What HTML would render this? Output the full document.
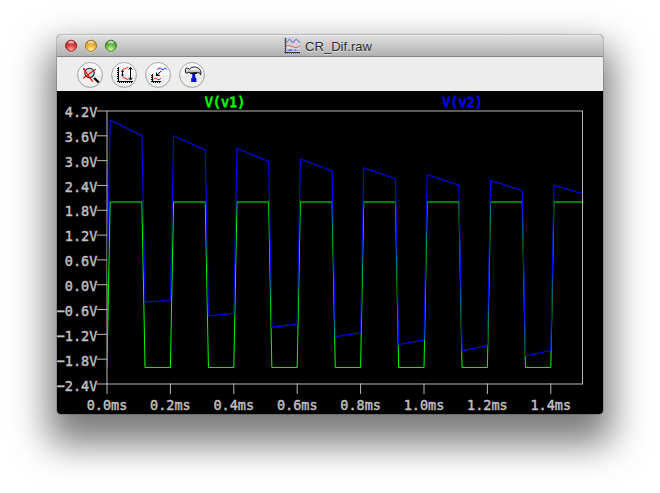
<!DOCTYPE html>
<html><head><meta charset="utf-8"><title>CR_Dif.raw</title>
<style>
html,body{margin:0;padding:0;background:#fff;}
body{width:660px;height:493px;position:relative;overflow:hidden;font-family:"Liberation Sans",sans-serif;}
.shadow{position:absolute;left:57px;top:35px;width:546px;height:379px;border-radius:4px 4px 4px 4px;
 box-shadow:0 21px 37px 8.5px rgba(0,0,0,0.52),0 0 0 1px rgba(0,0,0,0.17);}
.win{position:absolute;left:57px;top:35px;width:546px;height:379px;border-radius:4px 4px 4px 4px;overflow:hidden;background:#000;}
.titlebar{position:absolute;left:0;top:0;width:100%;height:22px;box-sizing:border-box;
 background:linear-gradient(#dedede 0%,#c8c8c8 50%,#b1b1b1 100%);border-top:1px solid #eeeeee;border-bottom:1px solid #828282;}
.title{position:absolute;left:248px;top:2px;font-size:13px;line-height:16px;color:#2a2a2a;white-space:nowrap;letter-spacing:0.45px;text-shadow:0 1px 0 rgba(255,255,255,0.6);}
.toolbar{position:absolute;left:0;top:22px;width:100%;height:34px;background:#ededed;}
svg.plot{position:absolute;left:0;top:0;width:660px;height:493px;}
</style></head><body>
<div class="shadow"></div>
<div class="win">
 <div class="titlebar">
 </div>
 <div class="toolbar"></div>
</div>
<svg class="plot" viewBox="0 0 660 493">

<defs>
<linearGradient id="bg" x1="0" y1="0" x2="0" y2="1">
<stop offset="0" stop-color="#ffffff"/><stop offset="0.5" stop-color="#f7f7f7"/><stop offset="0.52" stop-color="#ebebeb"/><stop offset="1" stop-color="#f3f3f3"/>
</linearGradient>
<radialGradient id="tr" cx="0.5" cy="0.85" r="0.7"><stop offset="0" stop-color="#ffb4ac"/><stop offset="0.5" stop-color="#ea4a4c"/><stop offset="1" stop-color="#b4242a"/></radialGradient>
<radialGradient id="ty" cx="0.5" cy="0.85" r="0.7"><stop offset="0" stop-color="#fff6b0"/><stop offset="0.5" stop-color="#f4bc40"/><stop offset="1" stop-color="#cf9226"/></radialGradient>
<radialGradient id="tg" cx="0.5" cy="0.85" r="0.7"><stop offset="0" stop-color="#dcf8b0"/><stop offset="0.5" stop-color="#7cc552"/><stop offset="1" stop-color="#47952f"/></radialGradient>
<linearGradient id="hl" x1="0" y1="0" x2="0" y2="1"><stop offset="0" stop-color="#fff" stop-opacity="0.95"/><stop offset="1" stop-color="#fff" stop-opacity="0.05"/></linearGradient>
<linearGradient id="hm" x1="0" y1="0" x2="0" y2="1"><stop offset="0" stop-color="#ffffff"/><stop offset="0.25" stop-color="#f4f4f4"/><stop offset="0.65" stop-color="#b4b4b4"/><stop offset="1" stop-color="#d8d8d8"/></linearGradient>
<clipPath id="pc"><rect x="107" y="105" width="476" height="285"/></clipPath>
</defs>
<!-- traffic lights -->
<g>
<circle cx="71.1" cy="46.5" r="6" fill="#fff" opacity="0.55"/><circle cx="91" cy="46.5" r="6" fill="#fff" opacity="0.55"/><circle cx="110.9" cy="46.5" r="6" fill="#fff" opacity="0.55"/>
<circle cx="71.1" cy="45.8" r="5.6" fill="url(#tr)" stroke="#8e2224" stroke-width="0.9"/>
<circle cx="91" cy="45.8" r="5.6" fill="url(#ty)" stroke="#96691c" stroke-width="0.9"/>
<circle cx="110.9" cy="45.8" r="5.6" fill="url(#tg)" stroke="#3c7428" stroke-width="0.9"/>
<ellipse cx="71.1" cy="42.7" rx="3.1" ry="1.7" fill="url(#hl)"/><ellipse cx="91" cy="42.7" rx="3.1" ry="1.7" fill="url(#hl)"/><ellipse cx="110.9" cy="42.7" rx="3.1" ry="1.7" fill="url(#hl)"/>
</g>
<text x="305" y="51.7" font-family="'Liberation Sans', sans-serif" font-size="13" fill="#fff" opacity="0.6" textLength="67" lengthAdjust="spacing">CR_Dif.raw</text>
<text x="305" y="50.8" font-family="'Liberation Sans', sans-serif" font-size="13" fill="#2c2c2c" textLength="67" lengthAdjust="spacing">CR_Dif.raw</text>
<!-- title icon -->
<g transform="translate(284,37.6)">
<rect x="0" y="0" width="16.2" height="16.2" fill="#d3d3d6"/>
<path d="M2 7.6 Q4 7.8 7.3 9 T14 9.7 L16 8.7 V10.8 H2Z" fill="#d4ecec" opacity="0.8"/>
<path d="M2 11.9 H16 V13.6 H2Z" fill="#b0b0e4" opacity="0.9"/>
<path d="M2.2 5.1 L5.6 1.6 L8.75 5.1 L12.2 1.6 L16 5.1" stroke="#7474ea" stroke-width="1.05" fill="none"/>
<path d="M1.95 8.5 Q3.2 7.6 4.6 8 T7.8 9 T11 9.8 T14.3 9.4 L16 8.4" stroke="#e46464" stroke-width="1.05" fill="none"/>
<path d="M4.3 12.6 H8.3 M10.6 12.6 H12.4" stroke="#5252d4" stroke-width="1.2" fill="none"/>
<path d="M1.7 0.4 V15.2" stroke="#333" stroke-width="1" fill="none"/>
<path d="M0.4 14.9 H16" stroke="#333" stroke-width="1" fill="none"/>
<path d="M0.7 0.5 V15" stroke="#333" stroke-width="1" stroke-dasharray="1 1" fill="none" opacity="0.55"/>
<path d="M1 15.9 H16" stroke="#333" stroke-width="1" stroke-dasharray="1 1" fill="none" opacity="0.55"/>
</g>
<!-- toolbar buttons -->
<circle cx="90.05" cy="75.6" r="12.6" fill="#000" opacity="0.10"/>
<circle cx="90.05" cy="74.9" r="12.4" fill="url(#bg)" stroke="#9e9e9e" stroke-width="0.9"/><circle cx="124.05" cy="75.6" r="12.6" fill="#000" opacity="0.10"/>
<circle cx="124.05" cy="74.9" r="12.4" fill="url(#bg)" stroke="#9e9e9e" stroke-width="0.9"/><circle cx="158.05" cy="75.6" r="12.6" fill="#000" opacity="0.10"/>
<circle cx="158.05" cy="74.9" r="12.4" fill="url(#bg)" stroke="#9e9e9e" stroke-width="0.9"/><circle cx="192.05" cy="75.6" r="12.6" fill="#000" opacity="0.10"/>
<circle cx="192.05" cy="74.9" r="12.4" fill="url(#bg)" stroke="#9e9e9e" stroke-width="0.9"/>
<g transform="translate(77,62)">
<circle cx="12.5" cy="10.9" r="4.7" fill="#d6dfdf" stroke="#111" stroke-width="1.1"/>
<path d="M10 9.4 L12.4 8.3 L12 9.9 Z M13.2 13.3 L15.4 11.4 L14.9 13.1Z" fill="#5cecf0"/>
<path d="M17.2 16 L21.7 20.5" stroke="#000" stroke-width="2.2"/>
<path d="M6.5 6.5 L15.65 19.6 M6.2 16.3 L18.7 7.1" stroke="#ff0000" stroke-width="1.15"/>
<circle cx="6.9" cy="7" r="0.9" fill="#ff0000"/>
</g>
<g transform="translate(111,62)">
<g fill="#000" shape-rendering="crispEdges">
<rect x="7" y="5" width="1" height="15"/><rect x="6" y="19" width="16" height="1"/>
<rect x="6" y="6" width="1" height="1"/><rect x="6" y="8" width="1" height="1"/><rect x="6" y="10" width="1" height="1"/><rect x="6" y="12" width="1" height="1"/><rect x="6" y="14" width="1" height="1"/><rect x="6" y="16" width="1" height="1"/><rect x="8" y="20" width="1" height="1"/><rect x="10" y="20" width="1" height="1"/><rect x="12" y="20" width="1" height="1"/><rect x="14" y="20" width="1" height="1"/><rect x="16" y="20" width="1" height="1"/><rect x="18" y="20" width="1" height="1"/><rect x="20" y="20" width="1" height="1"/>
</g>
<path d="M11.7 7.4 L17.4 5.3 M11.9 15.3 L17.4 17.8" stroke="#ff4020" stroke-width="1.1" fill="none"/>
<path d="M11.5 8.6 V13.8" stroke="#000" stroke-width="1"/>
<path d="M11.5 7.6 L13 10 H10Z M11.5 14.8 L13 12.4 H10Z" fill="#000"/>
<path d="M19.5 5.8 V17.6" stroke="#000" stroke-width="1"/>
<path d="M17.7 7.6 L19.5 5.3 L21.3 7.6 M17.7 15.8 L19.5 18.1 L21.3 15.8" stroke="#000" stroke-width="1" fill="none"/>
</g>
<g transform="translate(145,62)">
<path d="M8 16.5 H16.5 V18.8 H8Z" fill="#d8ffff" opacity="0.9"/>
<g fill="#000" shape-rendering="crispEdges">
<rect x="7" y="12" width="1" height="8"/><rect x="6" y="19" width="10" height="1"/>
<rect x="6" y="13" width="1" height="1"/><rect x="6" y="15" width="1" height="1"/><rect x="6" y="17" width="1" height="1"/><rect x="8" y="20" width="1" height="1"/><rect x="10" y="20" width="1" height="1"/><rect x="12" y="20" width="1" height="1"/><rect x="14" y="20" width="1" height="1"/>
</g>
<path d="M12.1 7.6 L13.5 6.3 H15.65 L16.9 7.5 H18.7 L19.6 6.3 H20.8 L21.8 7.6" stroke="#1a1aff" stroke-width="1" fill="none"/>
<path d="M8.3 17.6 L9.6 16.4 H11.1 L12.3 17.5 H14.4 L15.95 16.3" stroke="#ff1010" stroke-width="1" fill="none"/>
<path d="M15.4 9.8 L11.9 13.1" stroke="#000" stroke-width="1"/>
<path d="M11.6 10.4 V13.4 H14.6" stroke="#000" stroke-width="1.1" fill="none"/>
<circle cx="15.65" cy="9.5" r="0.8" fill="#d01010"/>
</g>
<g transform="translate(179,62)">
<path d="M13.2 11.5 H16.3 V16 H17.4 V19.9 H12.1 V16 H13.2Z" fill="#0c0cc4"/>
<path d="M13.2 11.5 H14.1 V16 H13.2Z M12.1 16 H13.2 V19.9 H12.1Z" fill="#3838ee"/>
<path d="M6.4 7.2 L7.2 6.1 L9.4 6.3 L10.4 7.7 L12.4 5.3 L16.3 5.0 L19 6.0 L21.4 8.2 L22 9.8 L21.6 12.9 L20.2 10.6 L18 11.0 L11.2 11.3 L10.2 10.0 L7.8 11.3 L6.4 10.6Z" fill="url(#hm)" stroke="#000" stroke-width="0.9" stroke-linejoin="round"/>
<path d="M11.2 11.3 L18 11.0" stroke="#000" stroke-width="1.3"/>
</g>

<g stroke="#b8b8b8" stroke-width="1" fill="none">
<path d="M107 384 V111 H583"/>
<path d="M106.5 384 H583"/>
<path d="M582.5 111 V384" shape-rendering="crispEdges"/>
<line x1="97" y1="111.00" x2="107.5" y2="111.00"/>
<line x1="97" y1="135.82" x2="107.5" y2="135.82"/>
<line x1="97" y1="160.64" x2="107.5" y2="160.64"/>
<line x1="97" y1="185.45" x2="107.5" y2="185.45"/>
<line x1="97" y1="210.27" x2="107.5" y2="210.27"/>
<line x1="97" y1="235.09" x2="107.5" y2="235.09"/>
<line x1="97" y1="259.91" x2="107.5" y2="259.91"/>
<line x1="97" y1="284.73" x2="107.5" y2="284.73"/>
<line x1="97" y1="309.55" x2="107.5" y2="309.55"/>
<line x1="97" y1="334.36" x2="107.5" y2="334.36"/>
<line x1="97" y1="359.18" x2="107.5" y2="359.18"/>
<line x1="97" y1="384.00" x2="107.5" y2="384.00"/>
<line x1="107.00" y1="383.5" x2="107.00" y2="394"/>
<line x1="170.40" y1="383.5" x2="170.40" y2="394"/>
<line x1="233.80" y1="383.5" x2="233.80" y2="394"/>
<line x1="297.20" y1="383.5" x2="297.20" y2="394"/>
<line x1="360.60" y1="383.5" x2="360.60" y2="394"/>
<line x1="424.00" y1="383.5" x2="424.00" y2="394"/>
<line x1="487.40" y1="383.5" x2="487.40" y2="394"/>
<line x1="550.80" y1="383.5" x2="550.80" y2="394"/>
</g>
<path d="M107.00 367.45 L110.17 202.00 L141.87 202.00 L145.04 367.45 L170.40 367.45 L173.57 202.00 L205.27 202.00 L208.44 367.45 L233.80 367.45 L236.97 202.00 L268.67 202.00 L271.84 367.45 L297.20 367.45 L300.37 202.00 L332.07 202.00 L335.24 367.45 L360.60 367.45 L363.77 202.00 L395.47 202.00 L398.64 367.45 L424.00 367.45 L427.17 202.00 L458.87 202.00 L462.04 367.45 L487.40 367.45 L490.57 202.00 L522.27 202.00 L525.44 367.45 L550.80 367.45 L553.97 202.00 L582.50 202.00" stroke="#00ff00" stroke-width="1.0" fill="none" stroke-linejoin="round" clip-path="url(#pc)"/>
<path d="M107.00 284.73 L110.17 120.10 L141.87 135.76 L145.04 301.88 L170.40 300.56 L173.57 135.77 L205.27 149.95 L208.44 315.92 L233.80 313.52 L236.97 148.60 L268.67 161.56 L271.84 327.41 L297.20 324.13 L300.37 159.11 L332.07 171.06 L335.24 336.82 L360.60 332.82 L363.77 167.71 L395.47 178.84 L398.64 344.53 L424.00 339.93 L427.17 174.75 L458.87 185.22 L462.04 350.84 L487.40 345.75 L490.57 180.52 L522.27 190.43 L525.44 356.00 L550.80 350.52 L553.97 185.24 L582.50 193.80" stroke="#0000ff" stroke-width="1.1" fill="none" stroke-linejoin="round" clip-path="url(#pc)"/>
<g font-family="'DejaVu Sans Mono', 'Liberation Mono', monospace" font-size="14.6" fill="#c0c0c0" stroke="#c0c0c0" stroke-width="0.45">
<text transform="translate(97.3,116.8) scale(0.925,1)" text-anchor="end">4.2V</text>
<text transform="translate(97.3,141.7) scale(0.925,1)" text-anchor="end">3.6V</text>
<text transform="translate(97.3,166.6) scale(0.925,1)" text-anchor="end">3.0V</text>
<text transform="translate(97.3,191.5) scale(0.925,1)" text-anchor="end">2.4V</text>
<text transform="translate(97.3,216.4) scale(0.925,1)" text-anchor="end">1.8V</text>
<text transform="translate(97.3,241.3) scale(0.925,1)" text-anchor="end">1.2V</text>
<text transform="translate(97.3,266.2) scale(0.925,1)" text-anchor="end">0.6V</text>
<text transform="translate(97.3,291.1) scale(0.925,1)" text-anchor="end">0.0V</text>
<text transform="translate(97.3,315.9) scale(0.925,1)" text-anchor="end">−0.6V</text>
<text transform="translate(97.3,340.8) scale(0.925,1)" text-anchor="end">−1.2V</text>
<text transform="translate(97.3,365.7) scale(0.925,1)" text-anchor="end">−1.8V</text>
<text transform="translate(97.3,390.6) scale(0.925,1)" text-anchor="end">−2.4V</text>
<text transform="translate(107.0,409.8) scale(0.925,1)" text-anchor="middle">0.0ms</text>
<text transform="translate(170.4,409.8) scale(0.925,1)" text-anchor="middle">0.2ms</text>
<text transform="translate(233.8,409.8) scale(0.925,1)" text-anchor="middle">0.4ms</text>
<text transform="translate(297.2,409.8) scale(0.925,1)" text-anchor="middle">0.6ms</text>
<text transform="translate(360.6,409.8) scale(0.925,1)" text-anchor="middle">0.8ms</text>
<text transform="translate(424.0,409.8) scale(0.925,1)" text-anchor="middle">1.0ms</text>
<text transform="translate(487.4,409.8) scale(0.925,1)" text-anchor="middle">1.2ms</text>
<text transform="translate(550.8,409.8) scale(0.925,1)" text-anchor="middle">1.4ms</text>
<text transform="translate(225.0,106.5) scale(0.925,1)" text-anchor="middle" fill="#00ff00" stroke="#00ff00" stroke-width="0.8">V(v1)</text>
<text transform="translate(462.5,106.5) scale(0.925,1)" text-anchor="middle" fill="#0000ff" stroke="#0000ff" stroke-width="0.8">V(v2)</text>
</g>
</svg>
</body></html>
